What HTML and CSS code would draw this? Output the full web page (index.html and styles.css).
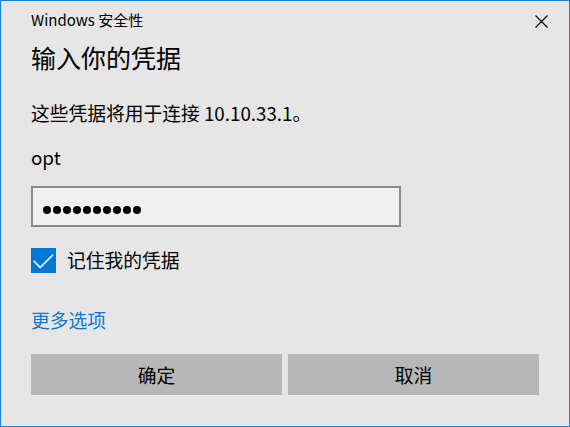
FILE: index.html
```html
<!DOCTYPE html>
<html lang="zh-CN">
<head>
    <meta charset="UTF-8">
    <meta name="viewport" content="width=device-width, initial-scale=1.0">
    <title>Windows 安全性</title>
    <link rel="stylesheet" href="styles.css">
</head>
<body>
    <div class="dialog">
        <div class="titlebar">
            <span class="title">Windows 安全性</span>
            <button class="close" aria-label="关闭">
                <svg width="13" height="13" viewBox="0 0 13 13">
                    <path d="M0.5 0.5 L12.5 12.5 M12.5 0.5 L0.5 12.5" stroke="#000" stroke-width="1.2" fill="none"/>
                </svg>
            </button>
        </div>

        <h1 class="heading">输入你的凭据</h1>
        <p class="message">这些凭据将用于连接 10.10.33.1。</p>

        <div class="user">opt</div>
        <div class="password" aria-label="密码">
            <span class="dot"></span><span class="dot"></span><span class="dot"></span><span class="dot"></span><span class="dot"></span>
            <span class="dot"></span><span class="dot"></span><span class="dot"></span><span class="dot"></span><span class="dot"></span>
        </div>

        <label class="remember">
            <span class="checkbox">
                <svg width="25" height="25" viewBox="0 0 25 25">
                    <path d="M2.6 12.8 L9.2 19.6 L22 6.8" stroke="#fff" stroke-width="1.6" fill="none"/>
                </svg>
            </span>
            <span>记住我的凭据</span>
        </label>

        <a class="more" href="#">更多选项</a>

        <div class="buttons">
            <button class="btn">确定</button>
            <button class="btn">取消</button>
        </div>
    </div>
</body>
</html>
```

FILE: styles.css
```css
body {
    margin: 0;
    font-family: "Noto Sans CJK SC", "Noto Sans", sans-serif;
    color: #000;
}
.dialog {
    width: 570px;
    height: 427px;
    box-sizing: border-box;
    border: 1px solid #1883d7;
    background-color: #e6e6e6;
    padding: 9px 30px 0 30px;
}
.titlebar {
    display: flex;
    justify-content: space-between;
    align-items: flex-start;
    height: 20px;
}
.title {
    font-size: 15px;
    line-height: 20px;
}
.close {
    background: none;
    border: none;
    padding: 0;
    margin: 5px -9px 0 0;
    width: 13px;
    height: 13px;
    display: block;
}
.close svg {
    display: block;
}
.heading {
    margin: 11px 0 0 0;
    font-size: 25px;
    font-weight: normal;
    line-height: 32px;
}
.message {
    margin: 27px 0 0 0;
    font-size: 18.75px;
    line-height: 26px;
}
.user {
    margin-top: 18px;
    font-size: 18.75px;
    line-height: 26px;
}
.password {
    margin-top: 16px;
    width: 370px;
    height: 41px;
    box-sizing: border-box;
    border: 2px solid #8a8a8a;
    background-color: #f0f0f0;
    padding: 18px 0 0 10px;
    display: flex;
    gap: 2px;
}
.dot {
    width: 8px;
    height: 8px;
    border-radius: 50%;
    background-color: #000;
}
.remember {
    margin-top: 20px;
    display: flex;
    align-items: center;
    gap: 11px;
    height: 26px;
    font-size: 18.75px;
    line-height: 26px;
}
.checkbox {
    width: 25px;
    height: 25px;
    background-color: #0078d7;
}
.checkbox svg {
    display: block;
}
.more {
    display: block;
    width: max-content;
    margin-top: 34px;
    font-size: 18.75px;
    line-height: 26px;
    color: #0a78d2;
    text-decoration: none;
}
.buttons {
    margin-top: 21px;
    display: flex;
    gap: 6px;
}
.btn {
    flex: 1;
    height: 41px;
    border: none;
    background-color: #b7b7b7;
    font-family: inherit;
    font-size: 18.75px;
    color: #000;
    padding: 0;
}
```
